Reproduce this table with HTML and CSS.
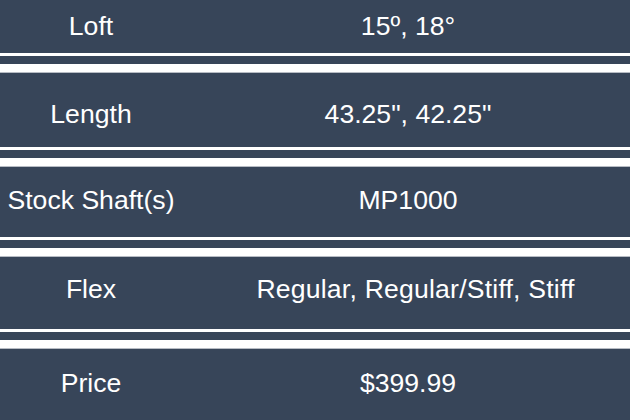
FILE: index.html
```html
<!DOCTYPE html>
<html>
<head>
<meta charset="utf-8">
<link rel="stylesheet" href="styles.css">
</head>
<body>
<div class="table">
  <div class="row r1"><div class="label">Loft</div><div class="value">15º, 18°</div></div>
  <div class="sep"><div class="s1"></div><div class="s2"></div><div class="s3"></div></div>
  <div class="row r2"><div class="label">Length</div><div class="value">43.25", 42.25"</div></div>
  <div class="sep"><div class="s1"></div><div class="s2"></div><div class="s3"></div></div>
  <div class="row r3"><div class="label">Stock Shaft(s)</div><div class="value">MP1000</div></div>
  <div class="sep"><div class="s1"></div><div class="s2"></div><div class="s3"></div></div>
  <div class="row r4"><div class="label">Flex</div><div class="value val-wide">Regular, Regular/Stiff, Stiff</div></div>
  <div class="sep"><div class="s1"></div><div class="s2"></div><div class="s3"></div></div>
  <div class="row r5"><div class="label">Price</div><div class="value">$399.99</div></div>
</div>
</body>
</html>
```
FILE: styles.css
```css
html, body {
  margin: 0;
  padding: 0;
  background: #ffffff;
}
.table {
  width: 630px;
  height: 420px;
  display: flex;
  flex-direction: column;
  font-family: "Liberation Sans", Arial, sans-serif;
  font-size: 26.6px;
  color: #ffffff;
}
.row {
  display: grid;
  grid-template-columns: 182px 1fr;
  align-items: center;
  background: #374559;
  box-sizing: border-box;
}
.label, .value {
  text-align: center;
  white-space: nowrap;
}
.value { padding-left: 4px; }
.val-wide { padding-left: 19px; letter-spacing: 0.2px; }
.r1 { height: 53px; }
.r2 { height: 74px; padding-top: 8px; }
.r3 { height: 70px; padding-bottom: 4px; }
.r4 { height: 72px; padding-bottom: 8px; }
.r5 { height: 71px; padding-bottom: 3px; }
.sep .s1 { height: 3px; background: #ffffff; }
.sep .s2 { height: 8px; background: #374559; }
.sep .s3 { height: 8px; background: #ffffff; border-bottom: 1px solid #b7bcc4; }
```
